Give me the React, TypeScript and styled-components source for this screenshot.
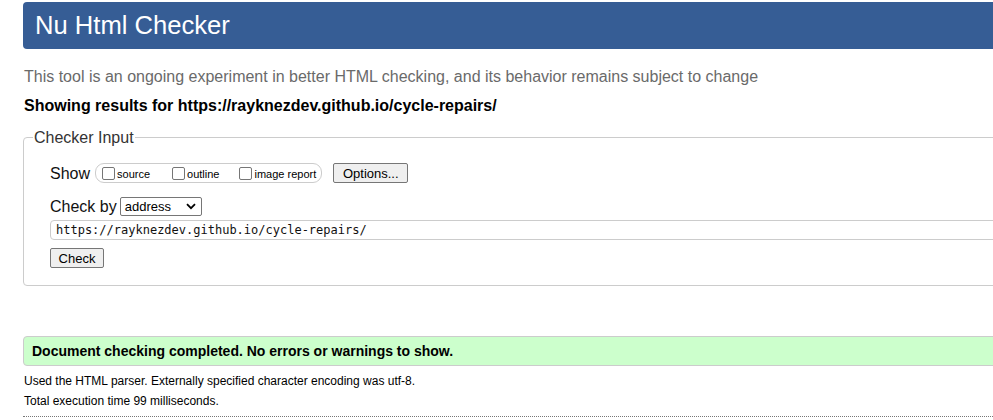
import React from "react";
import styled, { createGlobalStyle } from "styled-components";

const Global = createGlobalStyle`
  html, body { margin: 0; padding: 0; overflow: hidden; background: #fff; }
  body { font-family: "Liberation Sans", Arial, sans-serif; color: #000; }
`;

const Page = styled.div`
  width: 1010px;
  padding: 2px 0 0 23px;
`;

const Header = styled.header`
  height: 47px;
  background: #365d95;
  border-radius: 4px;
  display: flex;
  align-items: center;
  padding: 0 12px;
`;

const Title = styled.h1`
  margin: 0;
  font-size: 25.6px;
  font-weight: normal;
  color: #fff;
  line-height: 1;
`;

const Intro = styled.p`
  margin: 18px 0 0 1px;
  font-size: 16px;
  line-height: 19px;
  color: #6a6a6a;
`;

const Results = styled.p`
  margin: 10px 0 0 1px;
  font-size: 16px;
  line-height: 19px;
  font-weight: bold;
`;

const Fieldset = styled.fieldset`
  margin: 13px 0 0 0;
  padding: 0 0 17px 9px;
  border: 1px solid #ccc;
  border-radius: 4px;
  min-width: 0;
`;

const Legend = styled.legend`
  padding: 0 1px;
  font-size: 16px;
  line-height: 19px;
  color: #333;
`;

const Inner = styled.div`
  padding: 16px 0 0 17px;
  display: flex;
  flex-direction: column;
`;

const Row = styled.div<{ $mt?: number }>`
  display: flex;
  align-items: center;
  margin-top: ${(p) => p.$mt ?? 0}px;
`;

const Label = styled.span`
  font-size: 16px;
  line-height: 19px;
  color: #111;
`;

const Pill = styled.span`
  display: inline-flex;
  align-items: center;
  height: 18px;
  margin-left: 5px;
  padding: 0 5px 0 6px;
  border: 1px solid #ccc;
  border-radius: 9px;
`;

const CheckItem = styled.label<{ $gap?: number }>`
  display: inline-flex;
  align-items: center;
  font-size: 11px;
  margin-right: ${(p) => p.$gap ?? 0}px;
  color: #000;
`;

const CheckText = styled.span`
  padding-top: 2px;
`;

const Box = styled.input.attrs({ type: "checkbox" })`
  appearance: none;
  width: 13px;
  height: 13px;
  margin: 0 2px 0 0;
  border: 1px solid #767676;
  border-radius: 2px;
  background: #fff;
  box-sizing: border-box;
`;

const Button = styled.button<{ $ml?: number; $w: number }>`
  height: 20px;
  width: ${(p) => p.$w}px;
  margin-left: ${(p) => p.$ml ?? 0}px;
  padding: 0;
  font-family: "Liberation Sans", Arial, sans-serif;
  font-size: 13px;
  color: #000;
  background: #efefef;
  border: 1px solid #767676;
  border-radius: 2px;
  box-sizing: border-box;
`;

const Select = styled.span`
  display: inline-flex;
  align-items: center;
  justify-content: space-between;
  box-sizing: border-box;
  width: 82px;
  height: 19px;
  margin-left: 3px;
  padding: 0 5px 0 4px;
  border: 1px solid #767676;
  border-radius: 2px;
  font-size: 13px;
  color: #000;
  background: #fff;
`;

const UrlInput = styled.div`
  margin-top: 4px;
  height: 20px;
  box-sizing: border-box;
  border: 1px solid #ccc;
  border-radius: 4px;
  padding: 0 5px;
  display: flex;
  align-items: center;
  font-family: "DejaVu Sans Mono", "Liberation Mono", monospace;
  font-size: 12px;
  color: #111;
`;

const Done = styled.div`
  margin-top: 50px;
  height: 30px;
  box-sizing: border-box;
  background: #ccffcc;
  border: 1px solid #ccc;
  border-radius: 4px;
  padding: 0 8px;
  display: flex;
  align-items: center;
  font-size: 14px;
  font-weight: bold;
  color: #000;
`;

const Details = styled.div`
  margin-top: 5px;
  padding-left: 1px;
  font-size: 12px;
  line-height: 20px;
  color: #000;
`;

const Dotted = styled.hr`
  margin: 5px 0 0 0;
  border: none;
  border-top: 1px dotted #777;
  height: 0;
`;

export default function App() {
  return (
    <>
      <Global />
      <Page>
        <Header>
          <Title>Nu Html Checker</Title>
        </Header>
        <Intro>
          This tool is an ongoing experiment in better HTML checking, and its behavior remains subject to change
        </Intro>
        <Results>Showing results for https://rayknezdev.github.io/cycle-repairs/</Results>
        <Fieldset>
          <Legend>Checker Input</Legend>
          <Inner>
            <Row>
              <Label>Show</Label>
              <Pill>
                <CheckItem $gap={22}>
                  <Box />
                  <CheckText>source</CheckText>
                </CheckItem>
                <CheckItem $gap={20}>
                  <Box />
                  <CheckText>outline</CheckText>
                </CheckItem>
                <CheckItem>
                  <Box />
                  <CheckText>image report</CheckText>
                </CheckItem>
              </Pill>
              <Button $ml={11} $w={75}>Options...</Button>
            </Row>
            <Row $mt={14}>
              <Label>Check by</Label>
              <Select>
                address
                <svg width="10" height="7" viewBox="0 0 10 7">
                  <path d="M1 1.2 L5 5.2 L9 1.2" fill="none" stroke="#000" strokeWidth="1.8" />
                </svg>
              </Select>
            </Row>
            <UrlInput>https://rayknezdev.github.io/cycle-repairs/</UrlInput>
            <Row $mt={8}>
              <Button $w={54}>Check</Button>
            </Row>
          </Inner>
        </Fieldset>
        <Done>Document checking completed. No errors or warnings to show.</Done>
        <Details>
          <div>Used the HTML parser. Externally specified character encoding was utf-8.</div>
          <div>Total execution time 99 milliseconds.</div>
        </Details>
        <Dotted />
      </Page>
    </>
  );
}
